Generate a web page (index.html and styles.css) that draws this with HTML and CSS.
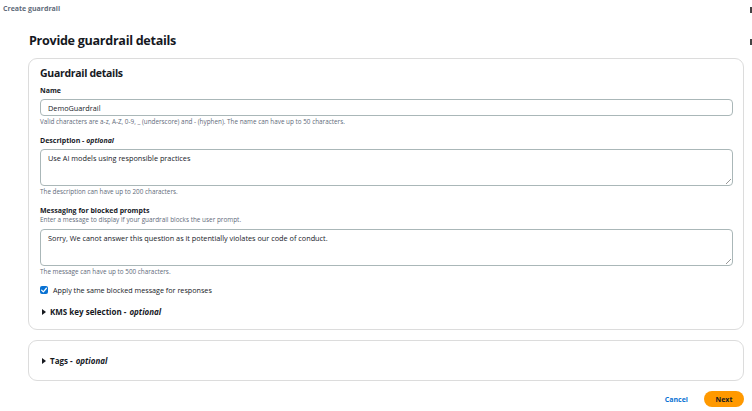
FILE: index.html
```html
<!DOCTYPE html>
<html lang="en">
<head>
<meta charset="utf-8">
<title>Create guardrail</title>
<link rel="stylesheet" href="styles.css">
</head>
<body>
<div class="crumb">Create guardrail</div>
<main class="page">
  <h1 class="title">Provide guardrail details</h1>
  <section class="card">
    <h2 class="card-title">Guardrail details</h2>
    <div class="field">
      <div class="label">Name</div>
      <div class="input">DemoGuardrail</div>
      <div class="hint">Valid characters are a-z, A-Z, 0-9, _ (underscore) and - (hyphen). The name can have up to 50 characters.</div>
    </div>
    <div class="field">
      <div class="label">Description - <i>optional</i></div>
      <div class="textarea">Use AI models using responsible practices<span class="grip"></span></div>
      <div class="hint">The description can have up to 200 characters.</div>
    </div>
    <div class="field">
      <div class="label">Messaging for blocked prompts</div>
      <div class="desc">Enter a message to display if your guardrail blocks the user prompt.</div>
      <div class="textarea">Sorry, We canot answer this question as it potentially violates our code of conduct.<span class="grip"></span></div>
      <div class="hint">The message can have up to 500 characters.</div>
    </div>
    <label class="check">
      <span class="box"><svg viewBox="0 0 10 10" width="8" height="8"><path d="M2 5.2 L4.2 7.3 L8 2.8" fill="none" stroke="#fff" stroke-width="1.6" stroke-linecap="round" stroke-linejoin="round"/></svg></span>
      <span>Apply the same blocked message for responses</span>
    </label>
    <div class="expander"><span class="tri"></span>KMS key selection - <i>optional</i></div>
  </section>
  <section class="card card-small">
    <div class="expander small"><span class="tri"></span>Tags - <i>optional</i></div>
  </section>
  <div class="actions">
    <span class="cancel">Cancel</span>
    <span class="next">Next</span>
  </div>
</main>
<span class="edge e1"></span>
<span class="edge e2"></span>
</body>
</html>
```
FILE: styles.css
```css
* { box-sizing: border-box; }
html, body { margin: 0; padding: 0; background: #fff; }
body {
  font-family: "Open Sans", "Noto Sans", "Liberation Sans", sans-serif;
  color: #16191f;
  width: 752px;
  height: 411px;
  overflow: hidden;
  position: relative;
}
.crumb {
  font-size: 7px;
  font-weight: 700;
  color: #5f6b7a;
  padding: 4px 0 0 3px;
  height: 14px;
  line-height: 10px;
}
.page {
  padding: 0 8px 0 28px;
}
.title {
  margin: 18px 0 0 1px;
  font-size: 12.6px;
  line-height: 18px;
  font-weight: 700;
  letter-spacing: -0.3px;
}
.card {
  margin-top: 8px;
  border: 1px solid #dcdcdc;
  border-radius: 9px;
  padding: 7px 10px 11px 11px;
  height: 272px;
}
.card-title {
  margin: 0;
  font-size: 10.5px;
  line-height: 14px;
  font-weight: 700;
  letter-spacing: -0.3px;
}
.field { margin-top: 6px; }
.field + .field { margin-top: 10px; }
.label {
  font-size: 7px;
  font-weight: 700;
  line-height: 10px;
  margin-bottom: 3px;
}
.label i { font-weight: 700; }
.desc {
  font-size: 6.4px;
  color: #5f6b7a;
  line-height: 8px;
  margin-top: -3px;
  margin-bottom: 5px;
}
.input, .textarea {
  border: 1px solid #aab7b8;
  border-radius: 4px;
  font-size: 7.3px;
  line-height: 10px;
  padding: 2.5px 7px;
  color: #16191f;
  position: relative;
}
.input { height: 17px; padding-top: 2.5px; }
.textarea { height: 37px; }
.grip {
  position: absolute;
  right: 1px;
  bottom: 1px;
  width: 5px;
  height: 5px;
  background: linear-gradient(135deg, transparent 45%, #999 46%, #999 54%, transparent 55%, transparent 70%, #999 71%, #999 79%, transparent 80%);
}
.hint {
  font-size: 6.35px;
  color: #5f6b7a;
  line-height: 8px;
  margin-top: 2px;
}
.check {
  display: flex;
  align-items: center;
  gap: 5px;
  margin-top: 9px;
  font-size: 7.2px;
  line-height: 10px;
}
.box {
  width: 8px;
  height: 8px;
  border-radius: 2px;
  background: #0972d3;
  display: flex;
  align-items: center;
  justify-content: center;
}
.expander {
  display: flex;
  align-items: center;
  margin-top: 11px;
  margin-left: 2px;
  font-size: 8px;
  font-weight: 700;
  line-height: 12px;
}
.expander i { margin-left: 3px; }
.tri {
  width: 0;
  height: 0;
  border-top: 3px solid transparent;
  border-bottom: 3px solid transparent;
  border-left: 4px solid #16191f;
  margin-right: 4px;
}
.card-small {
  height: 41px;
  margin-top: 10px;
  padding: 13.5px 10px 0 11px;
}
.expander.small { margin-top: 0; }
.actions {
  display: flex;
  justify-content: flex-end;
  align-items: center;
  gap: 16px;
  margin-top: 10px;
}
.cancel {
  font-size: 7px;
  font-weight: 700;
  color: #0972d3;
}
.next {
  background: #ff9900;
  color: #16191f;
  font-size: 7px;
  font-weight: 700;
  border-radius: 9px;
  width: 40px;
  height: 16px;
  display: flex;
  align-items: center;
  justify-content: center;
}
.edge {
  position: absolute;
  right: 0;
  width: 2px;
  height: 6px;
  background: #444;
}
.e1 { top: 7px; }
.e2 { top: 39px; }
```
